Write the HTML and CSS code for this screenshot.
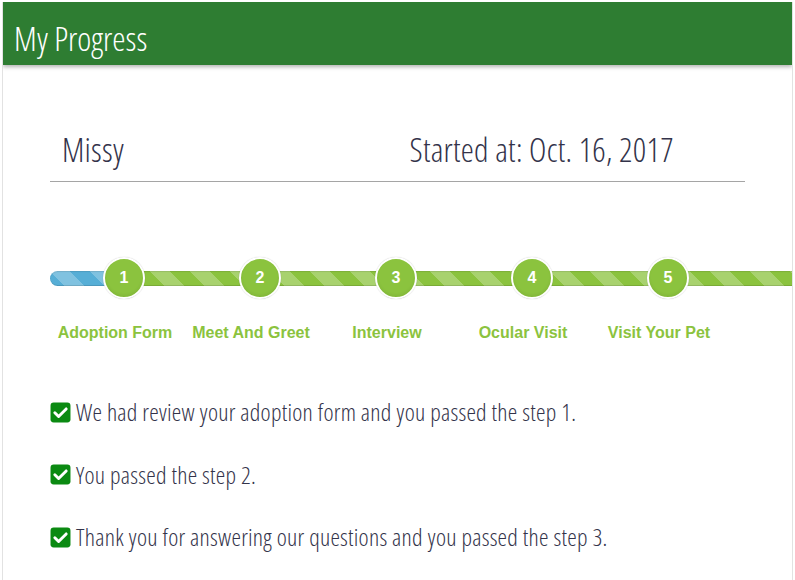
FILE: index.html
```html
<!DOCTYPE html>
<html>
<head>
<meta charset="utf-8">
<link rel="stylesheet" href="styles.css">
</head>
<body>
<div class="card">
  <div class="card-head">My Progress</div>
  <div class="card-body">
    <div class="info-row">
      <div class="info-col">Missy</div>
      <div class="info-col">Started at: Oct. 16, 2017</div>
    </div>
    <div class="stepper">
      <div class="nodes">
        <div class="track"><span class="track-blue"></span><span class="track-green"></span></div>
        <div class="node"><span class="circle">1</span></div>
        <div class="node"><span class="circle">2</span></div>
        <div class="node"><span class="circle">3</span></div>
        <div class="node"><span class="circle">4</span></div>
        <div class="node"><span class="circle">5</span></div>
      </div>
      <div class="labels">
        <div class="label">Adoption Form</div>
        <div class="label">Meet And Greet</div>
        <div class="label">Interview</div>
        <div class="label">Ocular Visit</div>
        <div class="label">Visit Your Pet</div>
      </div>
    </div>
    <ul class="checks">
      <li><svg class="chk" viewBox="0 0 20 20"><rect x="0.5" y="0.5" width="19" height="19" rx="3" fill="#0b8a12"/><path d="M4.6 10.2 L8.2 13.8 L15.4 6.6" fill="none" stroke="#fff" stroke-width="2.8" stroke-linecap="round" stroke-linejoin="round"/></svg>We had review your adoption form and you passed the step 1.</li>
      <li><svg class="chk" viewBox="0 0 20 20"><rect x="0.5" y="0.5" width="19" height="19" rx="3" fill="#0b8a12"/><path d="M4.6 10.2 L8.2 13.8 L15.4 6.6" fill="none" stroke="#fff" stroke-width="2.8" stroke-linecap="round" stroke-linejoin="round"/></svg>You passed the step 2.</li>
      <li><svg class="chk" viewBox="0 0 20 20"><rect x="0.5" y="0.5" width="19" height="19" rx="3" fill="#0b8a12"/><path d="M4.6 10.2 L8.2 13.8 L15.4 6.6" fill="none" stroke="#fff" stroke-width="2.8" stroke-linecap="round" stroke-linejoin="round"/></svg>Thank you for answering our questions and you passed the step 3.</li>
    </ul>
  </div>
</div>
</body>
</html>
```

FILE: styles.css
```css
html, body {
  margin: 0;
  padding: 0;
  background: #fff;
}
body {
  padding: 2px 2px 0 2px;
  font-family: "Open Sans", "DejaVu Sans", sans-serif;
  font-stretch: 75%;
  font-weight: 300;
  color: #333;
}
.card {
  width: 791px;
  height: 578px;
  box-sizing: border-box;
  border-left: 1px solid #e2e2e2;
  border-right: 1px solid #e2e2e2;
  overflow: hidden;
}
.card-head {
  height: 63px;
  box-sizing: border-box;
  background: #2e7d32;
  color: #fff;
  font-size: 33.5px;
  line-height: 48px;
  padding: 12px 11px 3px;
  box-shadow: 0 2px 4px rgba(0,0,0,.3);
  position: relative;
}
.card-body {
  padding: 63px 47px 0 47px;
}
.info-row {
  display: flex;
  border-bottom: 1px solid #a5a5a5;
  padding-bottom: 9px;
}
.info-col {
  flex: 1;
  padding: 0 12px;
  font-size: 33px;
  letter-spacing: 0.25px;
  line-height: 44px;
  color: #33334a;
}
.stepper {
  margin-top: 75px;
}
.nodes {
  position: relative;
  display: grid;
  grid-template-columns: repeat(5, 136px);
  padding-left: 6px;
  height: 42px;
}
.track {
  position: absolute;
  left: 0;
  right: -80px;
  top: 14px;
  height: 15px;
  display: flex;
}
.track-blue, .track-green {
  display: block;
  height: 100%;
  background-size: 40px 40px;
  background-image: linear-gradient(45deg, rgba(255,255,255,.25) 25%, transparent 25%, transparent 50%, rgba(255,255,255,.25) 50%, rgba(255,255,255,.25) 75%, transparent 75%, transparent);
  box-shadow: inset 0 -1px 0 rgba(0,0,0,.12), inset 0 1px 1px rgba(0,0,0,.1);
}
.track-blue {
  width: 60px;
  background-color: #56aed6;
  border-radius: 8px 0 0 8px;
}
.track-green {
  flex: 1;
  background-color: #8bc33e;
}
.node {
  display: flex;
  justify-content: center;
  position: relative;
}
.circle {
  width: 38px;
  height: 38px;
  border: 2px solid #fff;
  border-radius: 50%;
  background: #8bc33e;
  box-shadow: 0 0 1px rgba(0,0,0,.25), inset 0 -2px 3px rgba(0,0,0,.06);
  color: #fff;
  font-family: "Liberation Sans", Arial, sans-serif;
  font-stretch: normal;
  font-weight: 700;
  font-size: 16px;
  line-height: 38px;
  text-align: center;
}
.labels {
  display: grid;
  grid-template-columns: repeat(5, 136px);
  padding-left: 6px;
  margin-top: 25px;
}
.label {
  padding-right: 18px;
  text-align: center;
  white-space: nowrap;
  font-family: "Liberation Sans", Arial, sans-serif;
  font-stretch: normal;
  font-weight: 700;
  font-size: 16px;
  line-height: 17px;
  color: #8bc33e;
}
.checks {
  list-style: none;
  margin: 56px 0 0 0;
  padding: 0;
}
.checks li {
  display: flex;
  align-items: center;
  gap: 5px;
  font-size: 24px;
  letter-spacing: 0.25px;
  line-height: 30px;
  height: 30px;
  margin-bottom: 32.5px;
  color: #33334a;
  white-space: nowrap;
}
.chk {
  width: 21px;
  height: 21px;
  flex: none;
}
```
